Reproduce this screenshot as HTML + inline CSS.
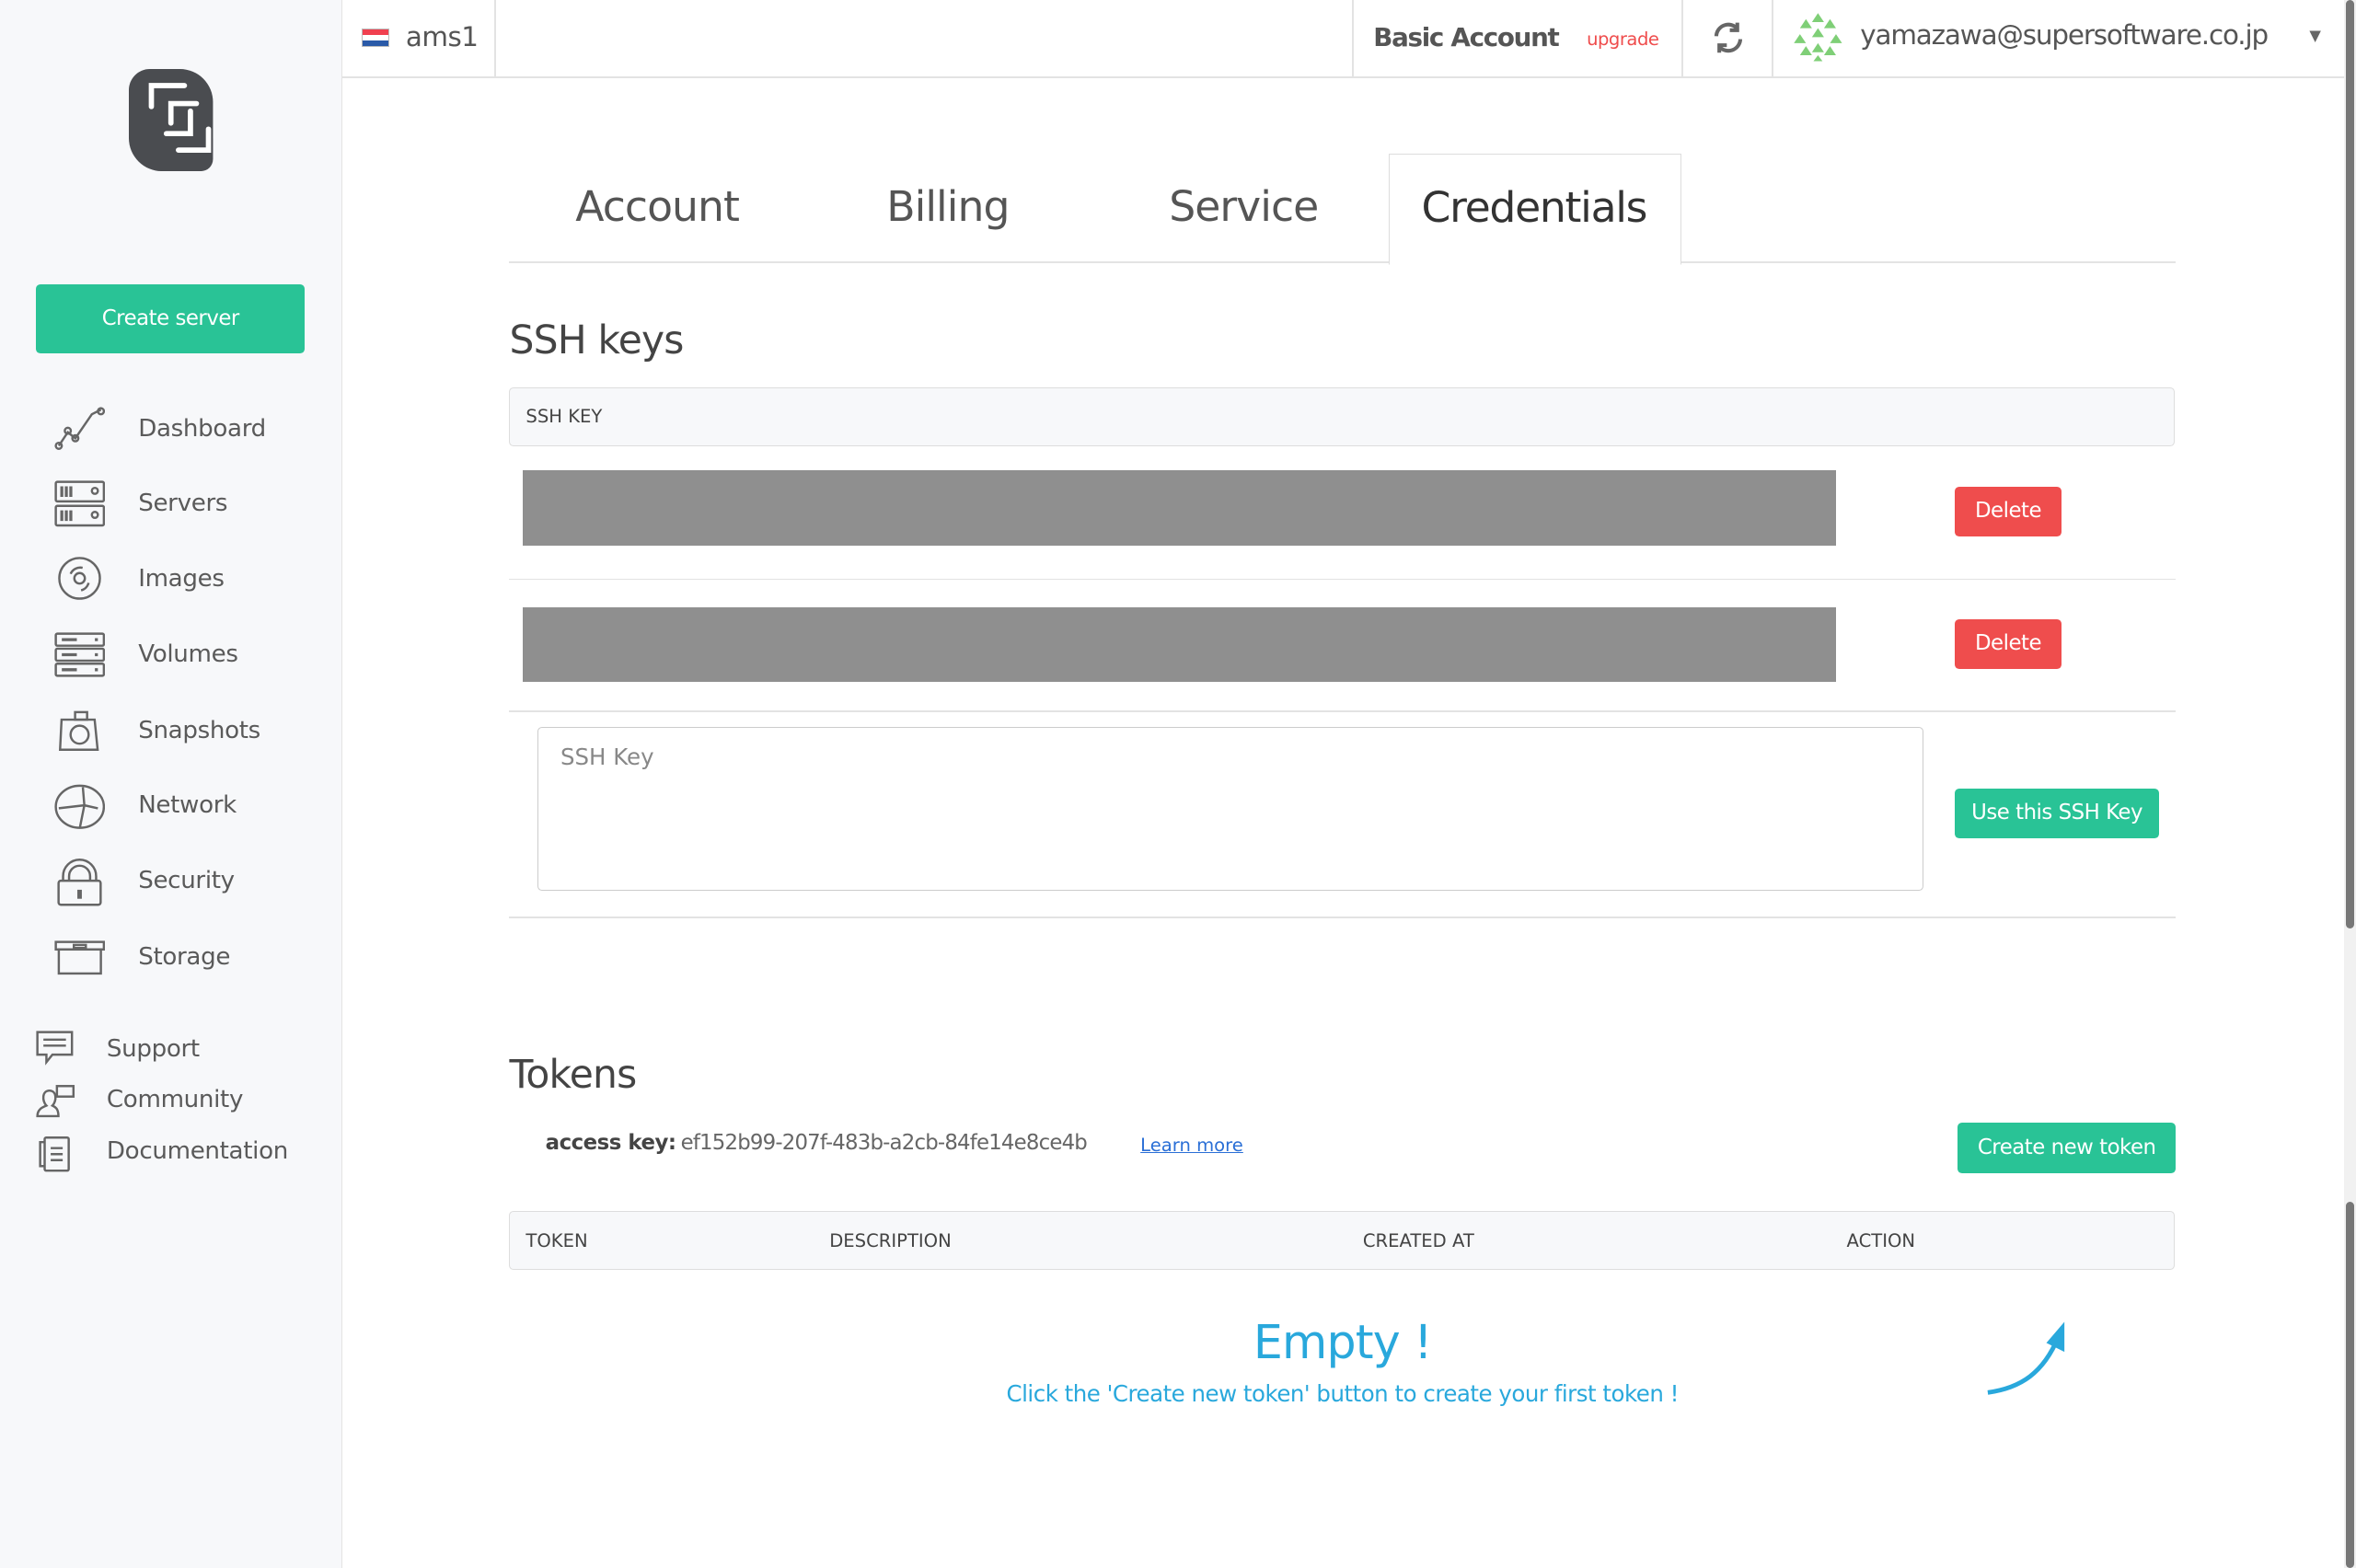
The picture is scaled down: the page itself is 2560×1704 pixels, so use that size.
<!DOCTYPE html>
<html><head><meta charset="utf-8"><style>
html,body{margin:0;padding:0;}
body{width:2560px;height:1704px;overflow:hidden;background:#fff;}
#w{zoom:1.63265;width:1568px;height:1044px;position:relative;font-family:"DejaVu Sans","Liberation Sans",sans-serif;color:#555;}
.a{position:absolute;white-space:nowrap;}
#side{left:0;top:0;width:227px;height:1044px;background:#f7f8fa;border-right:1px solid #e3e3e3;}
.nav{position:absolute;left:92px;font-size:16px;color:#5a5a5a;letter-spacing:-0.2px;}
.ic{position:absolute;fill:none;stroke:#666;stroke-width:1.5;}
.btn{position:absolute;color:#fff;border-radius:3px;text-align:center;font-size:14px;letter-spacing:-0.3px;}
.g{background:#29c396;}
.r{background:#ef4d4d;}
.line{position:absolute;height:1px;background:#e3e3e3;}
</style></head><body><div id="w">
<div id="side" class="a">
<svg class="a" style="left:86px;top:46px" width="56" height="68" viewBox="0 0 56 68"><path d="M14 0H34A22 22 0 0 1 56 22V60A8 8 0 0 1 48 68H22A22 22 0 0 1 0 46V14A14 14 0 0 1 14 0Z" fill="#4a4c50"/><g stroke="#fff" stroke-width="3.5" stroke-linecap="round" fill="none"><path d="M15 25V11H37"/><path d="M28 36V23H45"/><path d="M41 28V43H25"/><path d="M53 40V54H33"/></g></svg>
<div class="btn g" style="left:24px;top:189px;width:179px;height:46px;line-height:46px;">Create server</div>
<svg class="ic" style="left:36px;top:271px" width="34" height="30"><path d="M3 26L9 17L14 21L25 5L31 2M9 17l5 4" /><circle cx="3" cy="26" r="2"/><circle cx="9" cy="16" r="2"/><circle cx="14" cy="21" r="2"/><circle cx="31" cy="3" r="2"/></svg>
<div class="nav" style="top:276px">Dashboard</div>
<svg class="ic" style="left:36px;top:320px" width="34" height="32"><rect x="1" y="1" width="32" height="13" rx="1"/><rect x="1" y="17" width="32" height="13" rx="1"/><path d="M5 4v7M8 4v7M11 4v7M5 20v7M8 20v7M11 20v7" stroke-width="2"/><circle cx="27" cy="7" r="2"/><circle cx="27" cy="23" r="2"/></svg>
<div class="nav" style="top:326px">Servers</div>
<svg class="ic" style="left:38px;top:370px" width="30" height="30"><circle cx="15" cy="15" r="13.5"/><circle cx="15" cy="15" r="3.5"/><path d="M9 12a7 7 0 0 1 8-4M21 18a7 7 0 0 1-5 5"/></svg>
<div class="nav" style="top:376px">Images</div>
<svg class="ic" style="left:36px;top:421px" width="34" height="30"><rect x="1" y="1" width="32" height="8" rx="1"/><rect x="1" y="11" width="32" height="8" rx="1"/><rect x="1" y="21" width="32" height="8" rx="1"/><path d="M5 5h10M5 15h10M5 25h10M27 5h2M27 15h2M27 25h2" stroke-width="2"/></svg>
<div class="nav" style="top:426px">Volumes</div>
<svg class="ic" style="left:38px;top:471px" width="30" height="30"><path d="M3 8h22l2 20H2Z"/><rect x="12" y="3" width="8" height="5"/><circle cx="15" cy="18" r="6"/></svg>
<div class="nav" style="top:477px">Snapshots</div>
<svg class="ic" style="left:36px;top:520px" width="34" height="34"><ellipse cx="17" cy="17" rx="16" ry="14"/><path d="M3 18L20 16L19 4M20 16L29 18M20 16L17 31"/></svg>
<div class="nav" style="top:527px">Network</div>
<svg class="ic" style="left:38px;top:570px" width="30" height="34"><path d="M4 16V13a11 11 0 0 1 22 0V16M8 16V13a7 7 0 0 1 14 0V16"/><rect x="1" y="16" width="28" height="16" rx="1.5"/><path d="M15 22v6" stroke-width="3"/></svg>
<div class="nav" style="top:577px">Security</div>
<svg class="ic" style="left:36px;top:626px" width="34" height="24"><rect x="1" y="1" width="32" height="5"/><rect x="3" y="6" width="28" height="16"/><rect x="13" y="3" width="8" height="2"/></svg>
<div class="nav" style="top:628px">Storage</div>
<svg class="ic" style="left:24px;top:686px" width="26" height="24"><path d="M1 1h23v15H11l-4 5v-5H1Z"/><path d="M5 6h15M5 10h15"/></svg>
<div class="nav" style="left:71px;top:689px">Support</div>
<svg class="ic" style="left:24px;top:721px" width="26" height="24"><path d="M1 22c0-5 4-6 6-7-3-3-3-10 2-10s5 7 2 10c2 1 4 2 4 7Z"/><rect x="14" y="2" width="11" height="7"/></svg>
<div class="nav" style="left:71px;top:723px">Community</div>
<svg class="ic" style="left:26px;top:755px" width="22" height="26"><rect x="4" y="2" width="16" height="22" rx="1"/><path d="M4 5H1v16h3M8 9h8M8 13h8M8 17h8"/></svg>
<div class="nav" style="left:71px;top:757px">Documentation</div>
</div>

<div class="line" style="left:228px;top:51px;width:1332px;"></div>
<div class="a" style="left:241px;top:19px;width:18px;height:12px;border:1px solid #bbb;background:linear-gradient(#f0404f 33%,#fff 33%,#fff 66%,#2a5aa8 66%);box-sizing:border-box"></div>
<div class="a" style="left:270px;top:14px;font-size:18px;color:#555;letter-spacing:-0.3px">ams1</div>
<div class="a" style="left:329px;top:0;width:1px;height:51px;background:#e3e3e3"></div>
<div class="a" style="left:900px;top:0;width:1px;height:51px;background:#e3e3e3"></div>
<div class="a" style="left:914px;top:15px;font-size:17px;font-weight:bold;color:#555;letter-spacing:-0.8px">Basic Account</div>
<div class="a" style="left:1056px;top:19px;font-size:12px;color:#ef4d4d;letter-spacing:-0.3px">upgrade</div>
<div class="a" style="left:1119px;top:0;width:1px;height:51px;background:#e3e3e3"></div>
<svg class="a ic" style="left:1139px;top:14px;stroke-width:2.5" width="22" height="22"><path d="M3 10a8 8 0 0 1 14-5M19 12a8 8 0 0 1-14 5"/><path d="M17 1v5h-5M5 21v-5h5" /></svg>
<div class="a" style="left:1179px;top:0;width:1px;height:51px;background:#e3e3e3"></div>
<svg class="a" style="left:1192px;top:7px" width="36" height="36"><g fill="#7fcf77"><path d="M18 2l4 6h-8zM10 6l4 6H6zM26 6l4 6h-8zM18 12l4 6h-8zM6 16l4 6H2zM30 16l4 6h-8zM18 22l4 6h-8zM10 24l4 6H6zM26 24l4 6h-8zM18 30l3 4h-6z"/></g></svg>
<div class="a" style="left:1238px;top:13px;font-size:18px;color:#555;letter-spacing:-0.7px">yamazawa@supersoftware.co.jp</div>
<div class="a" style="left:1537px;top:18px;font-size:10px;color:#666">▼</div>
<div class="a" style="left:1560px;top:0;width:8px;height:1044px;background:#f1f1f1"></div>
<div class="a" style="left:1561px;top:0;width:6px;height:618px;background:#777;border-radius:3px"></div>
<div class="a" style="left:1561px;top:800px;width:6px;height:244px;background:#777;border-radius:3px"></div>

<div class="line" style="left:339px;top:174px;width:1109px;"></div>
<div class="a" style="left:383px;top:121px;font-size:28px;color:#555;letter-spacing:-0.6px">Account</div>
<div class="a" style="left:590px;top:121px;font-size:28px;color:#555;letter-spacing:-0.6px">Billing</div>
<div class="a" style="left:778px;top:121px;font-size:28px;color:#555;letter-spacing:-0.6px">Service</div>
<div class="a" style="left:924px;top:102px;width:194px;height:73px;border:1px solid #ddd;border-bottom:1px solid #fff;background:#fff"></div>
<div class="a" style="left:946px;top:122px;font-size:28px;color:#333;letter-spacing:-0.8px">Credentials</div>

<div class="a" style="left:339px;top:212px;font-size:26px;color:#444;letter-spacing:-0.5px">SSH keys</div>
<div class="a" style="left:339px;top:258px;width:1107px;height:38px;border:1px solid #ddd;border-radius:3px;background:#f7f8fa"></div>
<div class="a" style="left:350px;top:270px;font-size:12px;color:#444">SSH KEY</div>
<div class="a" style="left:348px;top:313px;width:874px;height:50px;background:#8f8f8f"></div>
<div class="btn r" style="left:1301px;top:324px;width:71px;height:33px;line-height:33px;">Delete</div>
<div class="line" style="left:339px;top:385px;width:1109px;"></div>
<div class="a" style="left:348px;top:404px;width:874px;height:50px;background:#8f8f8f"></div>
<div class="btn r" style="left:1301px;top:412px;width:71px;height:33px;line-height:33px;">Delete</div>
<div class="line" style="left:339px;top:473px;width:1109px;"></div>
<div class="a" style="left:358px;top:484px;width:922px;height:109px;border:1px solid #ccc;border-radius:3px;box-sizing:border-box"></div>
<div class="a" style="left:373px;top:495px;font-size:15px;color:#888">SSH Key</div>
<div class="btn g" style="left:1301px;top:525px;width:136px;height:33px;line-height:33px;">Use this SSH Key</div>
<div class="line" style="left:339px;top:610px;width:1109px;"></div>

<div class="a" style="left:339px;top:701px;font-size:26px;color:#444;letter-spacing:-0.5px">Tokens</div>
<div class="a" style="left:363px;top:753px;font-size:14px;color:#444;font-weight:bold;letter-spacing:-0.3px">access key:</div>
<div class="a" style="left:453px;top:753px;font-size:14px;color:#666;letter-spacing:-0.5px">ef152b99-207f-483b-a2cb-84fe14e8ce4b</div>
<div class="a" style="left:759px;top:755px;font-size:12px;color:#2a6fd6;text-decoration:underline">Learn more</div>
<div class="btn g" style="left:1303px;top:747px;width:145px;height:34px;line-height:34px;">Create new token</div>
<div class="a" style="left:339px;top:806px;width:1107px;height:38px;border:1px solid #ddd;border-radius:3px;background:#f7f8fa"></div>
<div class="a" style="left:350px;top:819px;font-size:12px;color:#444">TOKEN</div>
<div class="a" style="left:552px;top:819px;font-size:12px;color:#444">DESCRIPTION</div>
<div class="a" style="left:907px;top:819px;font-size:12px;color:#444">CREATED AT</div>
<div class="a" style="left:1229px;top:819px;font-size:12px;color:#444">ACTION</div>
<div class="a" style="left:339px;top:875px;width:1109px;text-align:center;font-size:31px;color:#29a8dc;letter-spacing:-0.5px">Empty !</div>
<div class="a" style="left:339px;top:919px;width:1109px;text-align:center;font-size:15px;color:#29a8dc;letter-spacing:-0.3px">Click the 'Create new token' button to create your first token !</div>
<svg class="a" style="left:1320px;top:876px" width="60" height="54"><path d="M3 51C25 48 40 38 50 14" stroke="#29a8dc" stroke-width="3" fill="none"/><path d="M42 18L54 4L54 24Z" fill="#29a8dc"/></svg>
</div></body></html>
